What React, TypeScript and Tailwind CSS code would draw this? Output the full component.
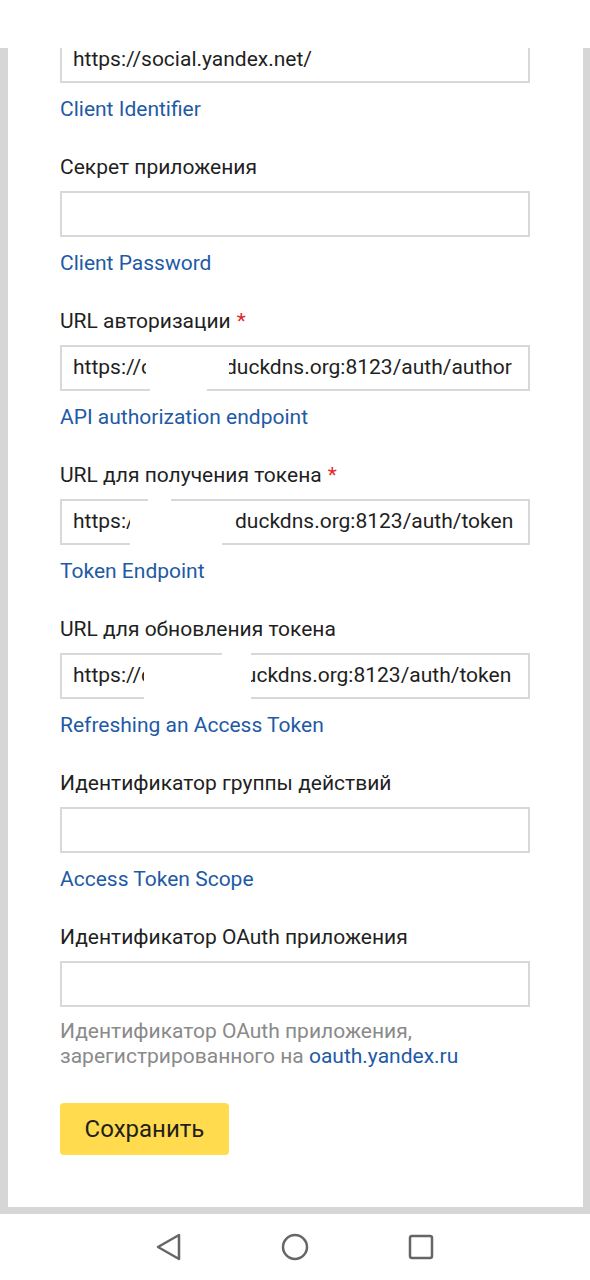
import React from "react";

interface Patch {
  left: number;
  top: number;
  width: number;
  height: number;
}

interface Field {
  label: string;
  required?: boolean;
  value?: string;
  prefix?: string;
  prefixWidth?: number;
  suffix?: string;
  patches?: Patch[];
  link?: string;
}

const fields: Field[] = [
  { label: "Секрет приложения", link: "Client Password" },
  {
    label: "URL авторизации",
    required: true,
    prefix: "https://c",
    prefixWidth: 152,
    suffix: "duckdns.org:8123/auth/author",
    patches: [
      { left: 84, top: 6, width: 83, height: 34 },
      { left: 88, top: 38, width: 57, height: 10 },
    ],
    link: "API authorization endpoint",
  },
  {
    label: "URL для получения токена",
    required: true,
    prefix: "https:/",
    prefixWidth: 162,
    suffix: "duckdns.org:8123/auth/token",
    patches: [
      { left: 86, top: -2, width: 23, height: 10 },
      { left: 68, top: 6, width: 92, height: 42 },
    ],
    link: "Token Endpoint",
  },
  {
    label: "URL для обновления токена",
    prefix: "https://c",
    prefixWidth: 160,
    suffix: "duckdns.org:8123/auth/token",
    patches: [
      { left: 82, top: 6, width: 80, height: 42 },
      { left: 160, top: -2, width: 29, height: 50 },
    ],
    link: "Refreshing an Access Token",
  },
  { label: "Идентификатор группы действий", link: "Access Token Scope" },
];

function TextBox({ f }: { f: Field }) {
  return (
    <div className="relative h-[46px] w-[470px] border-2 border-[#d8d8d8] bg-white">
      <div className="flex h-full items-center overflow-hidden ml-[11px] mr-[9px] text-[21px] text-[#1f1f1f] whitespace-nowrap">
        {f.value && <span>{f.value}</span>}
        {f.prefix && (
          <span className="shrink-0" style={{ width: f.prefixWidth }}>
            {f.prefix}
          </span>
        )}
        {f.suffix && <span className="shrink-0">{f.suffix}</span>}
      </div>
      {f.patches?.map((p, i) => (
        <div
          key={i}
          className="absolute bg-white"
          style={{ left: p.left, top: p.top, width: p.width, height: p.height }}
        />
      ))}
    </div>
  );
}

function Group({ f }: { f: Field }) {
  return (
    <div className="mt-[34px]">
      <div className="h-[24px] leading-[24px] text-[21px] text-[#1f1f1f]">
        {f.label}
        {f.required && <span className="ml-[6px] text-[#e3262a]">*</span>}
      </div>
      <div className="mt-[12px]">
        <TextBox f={f} />
      </div>
      <div className="mt-[14px] h-[24px] leading-[24px] text-[21px] text-[#1e5aa5]">{f.link}</div>
    </div>
  );
}

export default function App() {
  return (
    <div className="w-[590px] h-[1280px] flex flex-col bg-white" style={{ fontFamily: "Roboto, 'Noto Sans', sans-serif" }}>
      <div className="h-[48px] shrink-0 bg-white" />

      <div className="h-[1166px] shrink-0 overflow-hidden bg-[#d6d6d6] pl-[8px] pr-[7px]">
        <div className="bg-white -mt-[11px] pl-[52px] pr-[53px] pb-[52px]">
          <TextBox f={{ label: "", value: "https://social.yandex.net/" }} />
          <div className="mt-[14px] h-[24px] leading-[24px] text-[21px] text-[#1e5aa5]">Client Identifier</div>

          {fields.map((f) => (
            <Group key={f.label} f={f} />
          ))}

          <div className="mt-[34px]">
            <div className="h-[24px] leading-[24px] text-[21px] text-[#1f1f1f]">Идентификатор OAuth приложения</div>
            <div className="mt-[12px]">
              <TextBox f={{ label: "" }} />
            </div>
            <p className="mt-[12px] text-[21px] leading-[25px] text-[#8a8a8a]">
              Идентификатор OAuth приложения,
              <br />
              зарегистрированного на <span className="text-[#1e5aa5]">oauth.yandex.ru</span>
            </p>
          </div>

          <button className="mt-[34px] h-[52px] w-[169px] rounded-[4px] bg-[#ffdb4d] text-[24px] text-[#1f1f1f]">
            Сохранить
          </button>
        </div>
      </div>

      <div className="flex-1 flex items-center justify-center gap-[98px] bg-white">
        <svg width="28" height="28" viewBox="0 0 28 28" fill="none" stroke="#666" strokeWidth="2.5" strokeLinejoin="round">
          <path d="M24 2 L3 14 L24 26 Z" />
        </svg>
        <svg width="28" height="28" viewBox="0 0 28 28" fill="none" stroke="#666" strokeWidth="2.5">
          <circle cx="14" cy="14" r="12" />
        </svg>
        <svg width="28" height="28" viewBox="0 0 28 28" fill="none" stroke="#666" strokeWidth="2.5">
          <rect x="3" y="3" width="22" height="22" rx="2" />
        </svg>
      </div>
    </div>
  );
}
